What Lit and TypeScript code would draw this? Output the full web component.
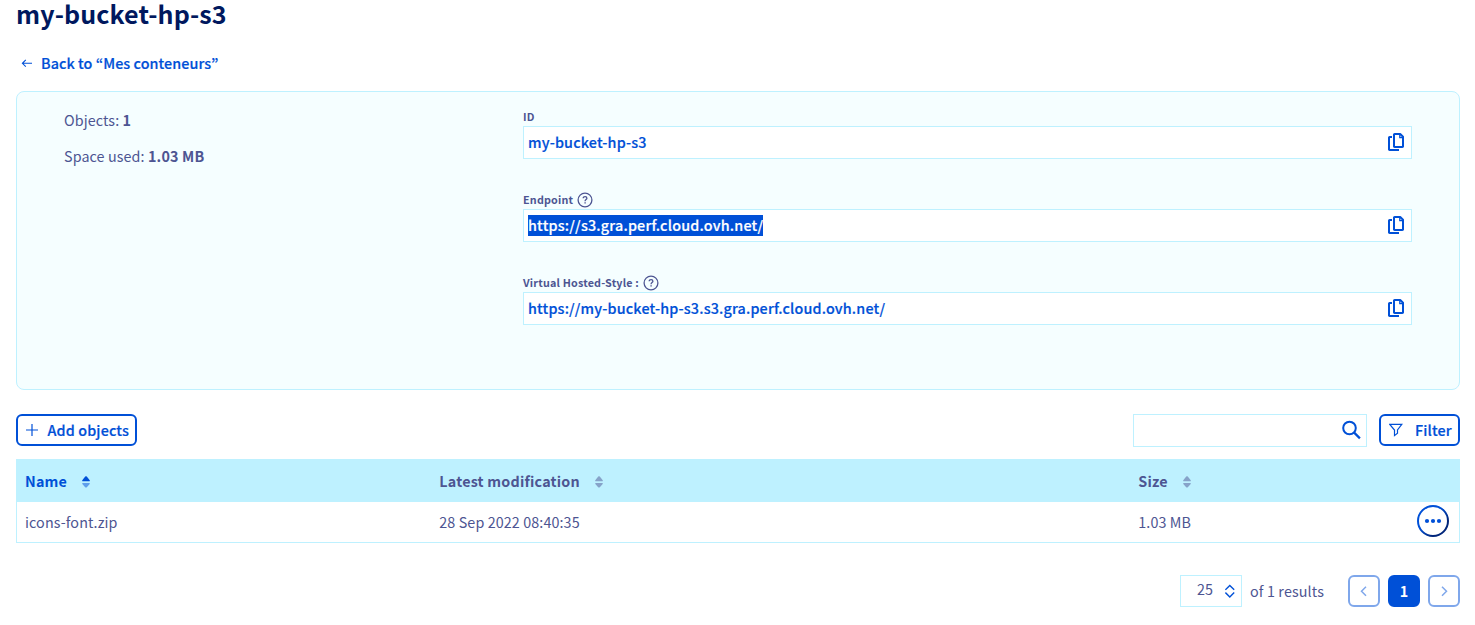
import { LitElement, html, css, svg, nothing } from "lit";
import { customElement, property } from "lit/decorators.js";

const copyIcon = html`<svg class="copy" width="17" height="20" viewBox="0 0 17 20" fill="none" stroke="#0050d7" stroke-width="2">
  <path d="M7 2h5.2L15 4.8V14.4a.6.6 0 0 1-.6.6H6.6a.6.6 0 0 1-.6-.6V2.6A.6.6 0 0 1 6.6 2z" stroke-linejoin="round"/>
  <path d="M11.8 2.3v3.4h3.2" stroke-width="1.3"/>
  <path d="M4 5H1.6a.6.6 0 0 0-.6.6V17.4a.6.6 0 0 0 .6.6H11"/>
</svg>`;

const helpIcon = html`<svg width="16" height="16" viewBox="0 0 16 16" fill="none" stroke="#4d5592">
  <circle cx="8" cy="8" r="6.9" stroke-width="1.3"/>
  <path d="M6.2 6.3c0-1 .8-1.7 1.9-1.7s1.8.7 1.8 1.6c0 1.2-1.8 1.4-1.8 2.8v.3" stroke-width="1.3"/>
  <path d="M8.1 10.3v1.3" stroke-width="1.4"/>
</svg>`;

@customElement("copy-field")
export class CopyField extends LitElement {
  @property() label = "";
  @property() value = "";
  @property({ type: Boolean }) help = false;
  @property({ type: Boolean }) selected = false;

  static styles = css`
    :host { display: block; height: 50px; }
    .label { display: flex; align-items: center; gap: 4px; box-sizing: border-box; height: 17px; padding-bottom: 2px; font-size: 10.75px; font-weight: 700; letter-spacing: .19px; line-height: 16px; color: #4d5592; }
    .label svg { flex: none; }
    .box { display: flex; align-items: center; justify-content: space-between; box-sizing: border-box; height: 33px; padding: 0 6px 0 4px; background: #fff; border: 1px solid #bef1ff; }
    .value { font-size: 14.33px; font-weight: 500; letter-spacing: .17px; line-height: 19px; height: 21px; color: #0050d7; -webkit-text-stroke: .2px currentColor; }
    .selected { background: #0050d7; color: #fff; letter-spacing: .205px; }
    .copy { margin-top: -2px; }
  `;

  render() {
    return html`
      <div class="label"><span>${this.label}</span>${this.help ? helpIcon : nothing}</div>
      <div class="box"><span class="value ${this.selected ? "selected" : ""}">${this.value}</span>${copyIcon}</div>
    `;
  }
}

@customElement("app-root")
export class AppRoot extends LitElement {
  static styles = css`
    :host { display: block; box-sizing: border-box; height: 625px; padding: 0 15px 0 16px; background: #fff; font-family: "Noto Sans CJK KR", "Noto Sans", sans-serif; font-size: 14.33px; letter-spacing: .1px; line-height: 20px; color: #4d5592; white-space: nowrap; }
    h1 { margin: 0; height: 27px; font-size: 25px; letter-spacing: .12px; line-height: 27px; font-weight: 700; color: #00185e; }
    .back { display: flex; align-items: center; gap: 8px; height: 20px; margin-top: 26px; padding-left: 5px; color: #0050d7; font-weight: 500; letter-spacing: .07px; -webkit-text-stroke: .2px currentColor; }
    .card { display: flex; box-sizing: border-box; height: 299px; margin-top: 18px; border: 1px solid #bef1ff; border-radius: 8px; background: #f5feff; }
    .stats { width: 459px; padding: 18px 0 0 47px; box-sizing: content-box; display: flex; flex-direction: column; gap: 16px; }
    .fields { display: flex; flex-direction: column; gap: 33px; width: 889px; padding-top: 17px; }
    b { font-weight: 700; letter-spacing: .15px; }
    .toolbar { display: flex; margin-top: 24px; height: 33px; }
    .btn { display: flex; align-items: center; box-sizing: border-box; height: 32px; border: 2px solid #0050d7; border-radius: 6px; color: #0050d7; font-weight: 500; letter-spacing: .14px; }
    .btn span { -webkit-text-stroke: .2px currentColor; }
    .add { width: 121px; padding-left: 8px; gap: 9.5px; }
    .filter { width: 81px; padding-left: 8px; gap: 12px; margin-left: 12px; }
    .search { display: flex; align-items: center; justify-content: flex-end; box-sizing: border-box; width: 234px; height: 33px; margin-left: auto; border: 1px solid #bef1ff; padding: 0 5px 1px 0; }
    .table { box-sizing: border-box; height: 84px; margin-top: 12px; border: 1px solid #bef1ff; }
    .row { display: grid; grid-template-columns: 414.3px 699px 1fr 32px; align-items: center; height: 40px; padding: 0 10px 0 8px; }
    .head { height: 42px; background: #bef1ff; font-weight: 700; letter-spacing: .2px; }
    .th { display: flex; align-items: center; gap: 15px; }
    .th svg { margin-top: 2px; }
    .on { color: #0050d7; }
    .more { display: block; margin-top: -2px; }
    .pager { display: flex; align-items: center; justify-content: flex-end; margin-top: 32px; height: 32px; }
    .select { display: flex; align-items: center; gap: 12px; box-sizing: border-box; width: 62px; height: 32px; padding-left: 16px; border: 1px solid #bef1ff; }
    .num { margin-top: -4px; }
    .results { width: 98px; padding-left: 8px; box-sizing: border-box; letter-spacing: .13px; }
    .page { display: flex; align-items: center; justify-content: center; box-sizing: border-box; width: 32px; height: 32px; margin-left: 8px; border: 2px solid #7fa7eb; border-radius: 6px; }
    .current { background: #0050d7; border-color: #0050d7; color: #fff; font-weight: 700; }
  `;

  private sorter(active: boolean) {
    return html`<svg width="8" height="12" viewBox="0 0 8 12">
      ${svg`<path d="M.3 5.2V4.2L3.2.6Q4 0 4.8.6L7.7 4.2V5.2z" fill=${active ? "#0050d7" : "#86a3c9"}/>
      <path d="M.3 7V8L3.2 11.2Q4 11.8 4.8 11.2L7.7 8V7z" fill=${active ? "#5f9feb" : "#86a3c9"}/>`}
    </svg>`;
  }

  render() {
    return html`
      <h1>my-bucket-hp-s3</h1>
      <div class="back">
        <svg width="12" height="12" viewBox="0 0 12 12" fill="none" stroke="#0050d7" stroke-width="1.1"><path d="M11 6.3H1.4M4.8 2.9L1.4 6.3l3.4 3.4"/></svg>
        <span>Back to “Mes conteneurs”</span>
      </div>
      <section class="card">
        <div class="stats">
          <div>Objects: <b>1</b></div>
          <div>Space used: <b>1.03 MB</b></div>
        </div>
        <div class="fields">
          <copy-field label="ID" value="my-bucket-hp-s3"></copy-field>
          <copy-field label="Endpoint" value="https://s3.gra.perf.cloud.ovh.net/" help selected></copy-field>
          <copy-field label="Virtual Hosted-Style :" value="https://my-bucket-hp-s3.s3.gra.perf.cloud.ovh.net/" help></copy-field>
        </div>
      </section>
      <div class="toolbar">
        <div class="btn add">
          <svg width="12" height="12" viewBox="0 0 12 12" stroke="#0050d7" stroke-width="1.2"><path d="M6 0v12M0 6h12"/></svg>
          <span>Add objects</span>
        </div>
        <div class="search">
          <svg width="20" height="20" viewBox="0 0 20 20" fill="none" stroke="#0050d7" stroke-width="2"><circle cx="8.5" cy="8" r="6.3"/><path d="M12.9 12.4l6 6" stroke-width="2.2"/></svg>
        </div>
        <div class="btn filter">
          <svg width="14" height="14" viewBox="0 0 14 14" fill="none" stroke="#0050d7" stroke-width="1.2"><path d="M.8 1.4h12L8.5 7v3.2L5.5 12.6V7z"/></svg>
          <span>Filter</span>
        </div>
      </div>
      <div class="table">
        <div class="row head">
          <div class="th on"><span>Name</span>${this.sorter(true)}</div>
          <div class="th"><span>Latest modification</span>${this.sorter(false)}</div>
          <div class="th"><span>Size</span>${this.sorter(false)}</div>
        </div>
        <div class="row">
          <span>icons-font.zip</span><span>28 Sep 2022 08:40:35</span><span>1.03 MB</span>
          <svg class="more" width="32" height="32" viewBox="0 0 32 32">
            <defs><linearGradient id="ring" x1="0.15" y1="0.15" x2="0.85" y2="0.85"><stop offset=".35" stop-color="#0050d7"/><stop offset=".85" stop-color="#00257a"/></linearGradient></defs>
            <circle cx="16" cy="16" r="15" fill="#fff" stroke="url(#ring)" stroke-width="2"/>
            <g fill="#0050d7"><circle cx="10" cy="16" r="2.1"/><circle cx="16" cy="16" r="2.1"/><circle cx="22" cy="16" r="2.1"/></g>
          </svg>
        </div>
      </div>
      <div class="pager">
        <div class="select"><span class="num">25</span><svg width="10" height="14" viewBox="0 0 10 14" fill="none" stroke="#0050d7" stroke-width="1.4"><path d="M.4 5.8L4.8 1.4l4.4 4.4M.4 8.6L4.8 13l4.4-4.4"/></svg></div>
        <span class="results">of 1 results</span>
        <div class="page"><svg width="10" height="12" viewBox="0 0 10 12" fill="none" stroke="#7fa7eb" stroke-width="1.5"><path d="M7 1.8L2.5 6.3 7 10.8"/></svg></div>
        <div class="page current">1</div>
        <div class="page"><svg width="10" height="12" viewBox="0 0 10 12" fill="none" stroke="#7fa7eb" stroke-width="1.5"><path d="M3 1.8L7.5 6.3 3 10.8"/></svg></div>
      </div>
    `;
  }
}
